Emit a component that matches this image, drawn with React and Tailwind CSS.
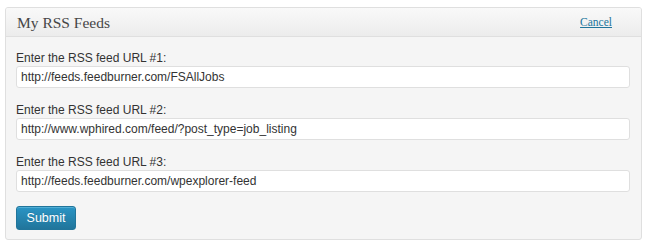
import React from "react";

const feeds = [
  "http://feeds.feedburner.com/FSAllJobs",
  "http://www.wphired.com/feed/?post_type=job_listing",
  "http://feeds.feedburner.com/wpexplorer-feed",
];

export default function App() {
  return (
    <div className="w-[649px] h-[249px] bg-white pt-[7px] pl-[5px]">
      <div className="w-[637px] border border-[#dfdfdf] rounded-[3px] bg-[#f5f5f5] overflow-hidden">
        <div className="h-[29px] flex items-center justify-between pl-[11px] pr-[29px] border-b border-[#dfdfdf] bg-gradient-to-b from-[#f9f9f9] to-[#ececec]">
          <span
            className="text-[15.5px] leading-[29px] text-[#464646]"
            style={{ fontFamily: '"Liberation Serif", serif' }}
          >
            My RSS Feeds
          </span>
          <a
            href="#"
            className="text-[11.5px] leading-[29px] text-[#21759b] underline"
            style={{ fontFamily: '"Liberation Serif", serif' }}
          >
            Cancel
          </a>
        </div>
        <div
          className="flex flex-col pt-[14px] pl-[10px] pr-[11px] pb-[9px]"
          style={{ fontFamily: '"Liberation Sans", Arial, sans-serif' }}
        >
          {feeds.map((url, i) => (
            <div key={i} className={i > 0 ? "mt-[15px]" : ""}>
              <label className="block text-[12px] leading-[15px] text-[#333]">
                Enter the RSS feed URL #{i + 1}:
              </label>
              <input
                type="text"
                defaultValue={url}
                className="block w-full h-[22px] px-[4px] text-[12px] text-[#333] bg-white border border-[#dfdfdf] rounded-[3px] outline-none"
                style={{ fontFamily: '"Liberation Sans", Arial, sans-serif' }}
              />
            </div>
          ))}
          <div className="mt-[13px]">
            <button
              type="button"
              className="w-[60px] h-[24px] rounded-[3px] border border-[#21759b] bg-gradient-to-b from-[#2a95c5] to-[#21759b] text-white text-[12.5px] leading-[14px] shadow-[inset_0_1px_0_rgba(120,200,230,0.5)]"
              style={{ fontFamily: '"Liberation Sans", Arial, sans-serif', textShadow: "0 -1px 0 rgba(0,0,0,0.1)" }}
            >
              Submit
            </button>
          </div>
        </div>
      </div>
    </div>
  );
}
